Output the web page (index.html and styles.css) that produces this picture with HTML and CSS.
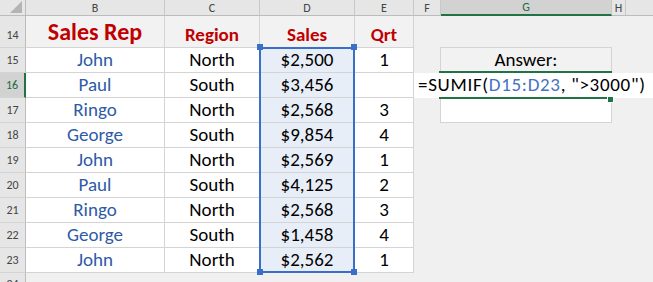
FILE: index.html
```html
<!DOCTYPE html>
<html lang="en">
<head>
    <meta charset="UTF-8">
    <title>SUMIF example</title>
    <link rel="stylesheet" href="styles.css">
</head>
<body>
<div class="sheet">
    <!-- column headers -->
    <div class="corner"><span class="corner-tri"></span></div>
    <div class="colhdr">B</div>
    <div class="colhdr">C</div>
    <div class="colhdr">D</div>
    <div class="colhdr">E</div>
    <div class="colhdr">F</div>
    <div class="colhdr active">G</div>
    <div class="colhdr">H</div>
    <div class="colhdr last"></div>

    <!-- row 14 -->
    <div class="rowhdr r14">14</div>
    <div class="cell head big c-b r14">Sales Rep</div>
    <div class="cell head c-c r14">Region</div>
    <div class="cell head c-d r14">Sales</div>
    <div class="cell head c-e r14">Qrt</div>

    <div class="rowhdr r15">15</div>
    <div class="cell name c-b r15">John</div>
    <div class="cell c-c r15">North</div>
    <div class="cell sel c-d r15">$2,500</div>
    <div class="cell c-e r15">1</div>

    <div class="rowhdr active r16">16</div>
    <div class="cell name c-b r16">Paul</div>
    <div class="cell c-c r16">South</div>
    <div class="cell sel c-d r16">$3,456</div>
    <div class="cell c-e r16"></div>

    <div class="rowhdr r17">17</div>
    <div class="cell name c-b r17">Ringo</div>
    <div class="cell c-c r17">North</div>
    <div class="cell sel c-d r17">$2,568</div>
    <div class="cell c-e r17">3</div>

    <div class="rowhdr r18">18</div>
    <div class="cell name c-b r18">George</div>
    <div class="cell c-c r18">South</div>
    <div class="cell sel c-d r18">$9,854</div>
    <div class="cell c-e r18">4</div>

    <div class="rowhdr r19">19</div>
    <div class="cell name c-b r19">John</div>
    <div class="cell c-c r19">North</div>
    <div class="cell sel c-d r19">$2,569</div>
    <div class="cell c-e r19">1</div>

    <div class="rowhdr r20">20</div>
    <div class="cell name c-b r20">Paul</div>
    <div class="cell c-c r20">South</div>
    <div class="cell sel c-d r20">$4,125</div>
    <div class="cell c-e r20">2</div>

    <div class="rowhdr r21">21</div>
    <div class="cell name c-b r21">Ringo</div>
    <div class="cell c-c r21">North</div>
    <div class="cell sel c-d r21">$2,568</div>
    <div class="cell c-e r21">3</div>

    <div class="rowhdr r22">22</div>
    <div class="cell name c-b r22">George</div>
    <div class="cell c-c r22">South</div>
    <div class="cell sel c-d r22">$1,458</div>
    <div class="cell c-e r22">4</div>

    <div class="rowhdr r23">23</div>
    <div class="cell name c-b r23">John</div>
    <div class="cell c-c r23">North</div>
    <div class="cell sel c-d r23">$2,562</div>
    <div class="cell c-e r23">1</div>

    <div class="rowhdr r24">24</div>

    <!-- answer block -->
    <div class="box answer">Answer:</div>
    <div class="editing">
        <span class="formula">=SUMIF(<span class="ref">D15:D23</span>, "&gt;3000")</span>
        <span class="fill-handle"></span>
    </div>
    <div class="box result"></div>

    <!-- range highlight -->
    <div class="range">
        <span class="handle tl"></span>
        <span class="handle tr"></span>
        <span class="handle bl"></span>
        <span class="handle br"></span>
    </div>
</div>
</body>
</html>
```

FILE: styles.css
```css
body {
    margin: 0;
    padding: 0;
    overflow: hidden;
    background-color: #f0f0f0;
    font-family: Carlito, Calibri, Lato, sans-serif;
}
.sheet {
    display: grid;
    grid-template-columns: 26px 139px 95px 95px 59px 27px 171px 14px 1fr;
    grid-template-rows: 16px 32px repeat(9, 25px) 25px;
    width: 653px;
    height: 282px;
    overflow: hidden;
    background-color: #f0f0f0;
    color: #000;
}

/* headers */
.corner,
.colhdr,
.rowhdr {
    box-sizing: border-box;
    background-color: #e6e6e6;
    color: #444;
    font-size: 12px;
    display: flex;
    justify-content: center;
}
.corner {
    position: relative;
    border-right: 1px solid #bcbcbc;
    border-bottom: 1px solid #bcbcbc;
}
.corner-tri {
    position: absolute;
    right: 3px;
    bottom: 2px;
    width: 0;
    height: 0;
    border-left: 12px solid transparent;
    border-bottom: 12px solid #b4b4b4;
}
.colhdr {
    align-items: center;
    line-height: 14px;
    border-right: 1px solid #c8c8c8;
    border-bottom: 1px solid #bcbcbc;
}
.colhdr.last {
    border-right: none;
}
.colhdr.active {
    background-color: #d2d2d2;
    color: #1e6b41;
    border-bottom: 2px solid #217346;
}
.rowhdr {
    grid-column: 1;
    align-items: flex-end;
    line-height: 14px;
    padding-bottom: 5px;
    border-right: 1px solid #bcbcbc;
    border-bottom: 1px solid #d4d4d4;
}
.rowhdr.active {
    background-color: #d2d2d2;
    color: #1e6b41;
    border-right: 2px solid #217346;
}
.rowhdr.r24 {
    align-items: flex-start;
    padding-top: 4px;
}

/* cells */
.cell {
    box-sizing: border-box;
    background-color: #fff;
    border-right: 1px solid #d4d4d4;
    border-bottom: 1px solid #d4d4d4;
    display: flex;
    align-items: flex-end;
    justify-content: center;
    font-size: 19px;
    line-height: 22px;
    padding-bottom: 1px;
    white-space: nowrap;
}
.cell.head {
    background-color: #f2f2f2;
    color: #c00000;
    font-weight: bold;
}
.cell.big {
    font-size: 24px;
    line-height: 28px;
}
.cell.name {
    color: #2e5aa6;
}
.cell.sel {
    background-color: #e8eef8;
}

.c-b { grid-column: 2; }
.c-c { grid-column: 3; }
.c-d { grid-column: 4; }
.c-e { grid-column: 5; }
.r14 { grid-row: 2; }
.r15 { grid-row: 3; }
.r16 { grid-row: 4; }
.r17 { grid-row: 5; }
.r18 { grid-row: 6; }
.r19 { grid-row: 7; }
.r20 { grid-row: 8; }
.r21 { grid-row: 9; }
.r22 { grid-row: 10; }
.r23 { grid-row: 11; }
.r24 { grid-row: 12; }

/* answer area */
.box {
    grid-column: 7;
    margin: -1px 0 0 -1px;
    border: 1px solid #d4d4d4;
    background-color: #f2f2f2;
    display: flex;
    align-items: flex-end;
    justify-content: center;
    font-size: 19px;
    line-height: 22px;
    padding-bottom: 1px;
}
.answer {
    grid-row: 3;
}
.result {
    grid-row: 5;
    background-color: #fff;
}
.editing {
    grid-column: 6 / -1;
    grid-row: 4;
    position: relative;
    z-index: 2;
    background-color: #fff;
    display: flex;
    align-items: flex-end;
    padding: 0 0 2px 4px;
    font-size: 19px;
    line-height: 22px;
    white-space: nowrap;
}
.formula {
    letter-spacing: 0.7px;
}
.editing::before,
.editing::after {
    content: "";
    position: absolute;
    left: 25px;
    height: 2px;
    background-color: #217346;
}
.editing::before {
    top: -2px;
    width: 173px;
}
.editing::after {
    top: 24px;
    width: 168px;
}
.ref {
    color: #4472c4;
}
.fill-handle {
    position: absolute;
    left: 193px;
    top: 23px;
    width: 5px;
    height: 5px;
    background-color: #217346;
    border: 1px solid #fff;
}

/* highlighted range D15:D23 */
.range {
    grid-column: 4;
    grid-row: 3 / 12;
    margin: -1px 0 0 -1px;
    border: 2px solid #3a6fc9;
    position: relative;
    z-index: 1;
}
.handle {
    position: absolute;
    width: 6px;
    height: 6px;
    background-color: #3a6fc9;
}
.handle.tl { left: -4px; top: -5px; }
.handle.tr { right: -4px; top: -5px; }
.handle.bl { left: -4px; bottom: -4px; }
.handle.br { right: -4px; bottom: -4px; }
```
